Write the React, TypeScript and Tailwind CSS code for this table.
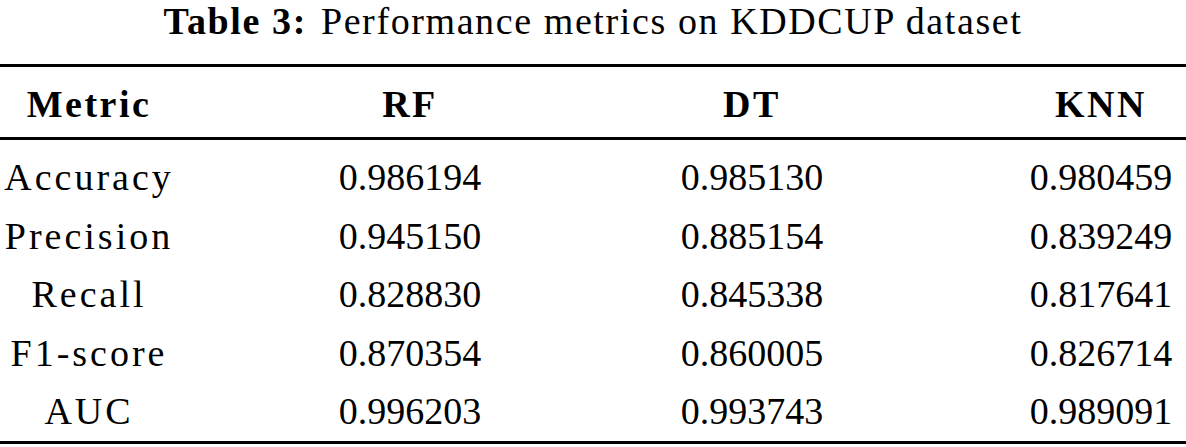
const rows: [string, string, string, string][] = [
  ["Accuracy", "0.986194", "0.985130", "0.980459"],
  ["Precision", "0.945150", "0.885154", "0.839249"],
  ["Recall", "0.828830", "0.845338", "0.817641"],
  ["F1-score", "0.870354", "0.860005", "0.826714"],
  ["AUC", "0.996203", "0.993743", "0.989091"],
]

function Row({ cells, head }: { cells: string[]; head?: boolean }) {
  return (
    <div className={`flex text-center leading-[42px] ${head ? "font-bold tracking-[2.5px]" : ""}`}>
      <div className={`w-[178px] ${head ? "" : "tracking-[3px]"}`}>{cells[0]}</div>
      <div className="w-[464px]">{cells[1]}</div>
      <div className="w-[220px]">{cells[2]}</div>
      <div className="ml-auto w-[170px]">{cells[3]}</div>
    </div>
  )
}

export default function App() {
  return (
    <div className="w-[1186px] h-[447px] bg-white text-black text-[38px] font-[Liberation_Serif,serif] overflow-hidden">
      <div className="text-center leading-[42px] tracking-[1.6px]">
        <span className="font-bold">Table 3:</span>
        <span className="ml-[14px]">Performance metrics on KDDCUP dataset</span>
      </div>
      <div className="mt-[22px] h-[3px] bg-black" />
      <div className="pt-[16px]">
        <Row head cells={["Metric", "RF", "DT", "KNN"]} />
      </div>
      <div className="mt-[12px] h-[3px] bg-black" />
      <div className="pt-[16px] flex flex-col gap-y-[16.5px]">
        {rows.map((r) => (
          <Row key={r[0]} cells={r} />
        ))}
      </div>
      <div className="mt-[9px] h-[3px] bg-black" />
    </div>
  )
}
